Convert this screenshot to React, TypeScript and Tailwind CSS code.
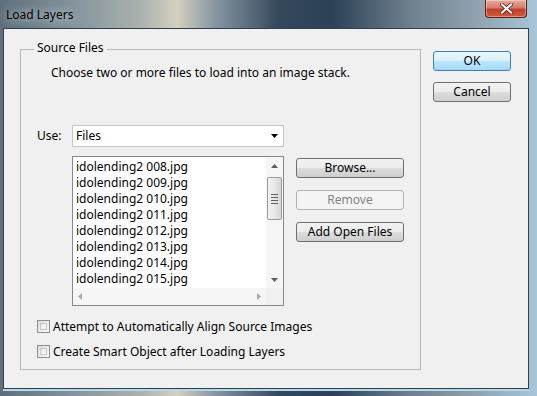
const files = [
  "idolending2 008.jpg",
  "idolending2 009.jpg",
  "idolending2 010.jpg",
  "idolending2 011.jpg",
  "idolending2 012.jpg",
  "idolending2 013.jpg",
  "idolending2 014.jpg",
  "idolending2 015.jpg",
];

function Arrow({ dir, color = "#4d4d4d" }: { dir: "up" | "down" | "left" | "right"; color?: string }) {
  const pts = {
    up: "0,4 3.5,0 7,4",
    down: "0,0 3.5,4 7,0",
    left: "4,0 0,3.5 4,7",
    right: "0,0 4,3.5 0,7",
  }[dir];
  const w = dir === "up" || dir === "down" ? 7 : 4;
  const h = dir === "up" || dir === "down" ? 4 : 7;
  return (
    <svg width={w} height={h} viewBox={`0 0 ${w} ${h}`}>
      <polygon points={pts} fill={color} />
    </svg>
  );
}

function VistaButton({ label, primary, disabled, className }: { label: string; primary?: boolean; disabled?: boolean; className?: string }) {
  const skin = disabled
    ? "border-[#adb2b5] bg-[#f4f4f4] text-[#838383]"
    : primary
      ? "border-[#3c7fb1] bg-[linear-gradient(#eaf6fd_0%,#d9f0fc_50%,#bee6fd_50%,#a7d9f5_100%)] text-black"
      : "border-[#707070] bg-[linear-gradient(#f2f2f2_0%,#ebebeb_50%,#dddddd_50%,#cfcfcf_100%)] text-black";
  return (
    <div className={`flex items-center justify-center rounded-[3px] border ${skin} ${className ?? ""}`}>
      <span className="text-[12px] leading-none">{label}</span>
    </div>
  );
}

function Checkbox({ label }: { label: string }) {
  return (
    <div className="flex items-center gap-[3px]">
      <div className="h-[13px] w-[13px] border border-[#8f8f8f] bg-[linear-gradient(135deg,#dcdcdc,#fbfbfb)] p-[2px]">
        <div className="h-full w-full border border-[#c8c8c8] bg-[linear-gradient(135deg,#e6e6e6,#fdfdfd)]" />
      </div>
      <span className="text-[12px] leading-none">{label}</span>
    </div>
  );
}

export default function App() {
  return (
    <div
      className="h-[396px] w-[537px] overflow-hidden bg-[linear-gradient(90deg,#5e6f7b_0%,#7f909b_12%,#a9b1ad_26%,#d3d0bf_33%,#8796a2_40%,#34475b_52%,#2d4157_62%,#6d7f8d_76%,#8fa0ab_88%,#a7c6da_100%)]"
      style={{ fontFamily: '"Noto Sans", "Open Sans", sans-serif' }}
    >
      {/* title bar */}
      <div className="flex h-[28px] items-start justify-between">
        <span className="ml-[6px] mt-[9px] text-[12px] leading-none text-black [text-shadow:0_0_8px_rgba(255,255,255,0.9)]">
          Load Layers
        </span>
        <div className="mr-[10px] flex h-[18px] w-[42px] items-center justify-center rounded-b-[4px] border border-t-0 border-[#5a2019] bg-[linear-gradient(#e9a99c_0%,#d47e6c_45%,#c0402a_55%,#d2593d_100%)] shadow-[inset_0_0_0_1px_rgba(255,255,255,0.35)]">
          <svg width="13" height="11" viewBox="0 0 13 11">
            <path d="M2 1.5 L11 9.5 M11 1.5 L2 9.5" stroke="#4b1a12" strokeWidth="3.6" strokeLinecap="square" />
            <path d="M2 1.5 L11 9.5 M11 1.5 L2 9.5" stroke="#ffffff" strokeWidth="2.2" strokeLinecap="square" />
          </svg>
        </div>
      </div>

      {/* client area */}
      <div className="ml-[3px] h-[361px] w-[526px] border border-[#2f3f4d] bg-[#f0f0f0] shadow-[0_2px_0_#b7d6ea]">
        <div className="flex gap-[12px] pl-[16px] pt-[20px]">
          {/* Source Files group */}
          <div className="relative h-[321px] w-[401px] border border-[#b8b8b8] pl-[16px]">
            <span className="absolute left-[13px] top-[-10px] bg-[#f0f0f0] px-[3px] text-[12px] leading-[16px]">
              Source Files
            </span>
            <div className="ml-[14px] mt-[16px] text-[12px] leading-[14px]">
              Choose two or more files to load into an image stack.
            </div>

            <div className="mt-[45px] flex items-center gap-[10px]">
              <span className="w-[25px] text-[12px] leading-none">Use:</span>
              <div className="flex h-[22px] w-[212px] items-center justify-between border border-[#c5c5c5] bg-white pl-[3px] pr-[5px]">
                <span className="text-[12px] leading-none">Files</span>
                <Arrow dir="down" color="#000" />
              </div>
            </div>

            <div className="mt-[9px] flex">
              {/* list box */}
              <div className="ml-[35px] flex h-[150px] w-[212px] flex-col border border-[#828790] bg-white">
                <div className="flex h-[131px]">
                  <div className="flex flex-1 flex-col pl-[3px] pt-[2px]">
                    {files.map((f) => (
                      <div key={f} className="h-[16px] text-[12px] leading-[16px]">
                        {f}
                      </div>
                    ))}
                  </div>
                  <div className="flex w-[17px] flex-col items-center bg-[#f5f5f5]">
                    <div className="flex h-[17px] items-center justify-center">
                      <Arrow dir="up" color="#5f5f5f" />
                    </div>
                    <div className="mt-[3px] flex h-[43px] w-[15px] flex-col items-center justify-center gap-[2px] rounded-[2px] border border-[#9b9b9b] bg-[linear-gradient(90deg,#f3f3f3,#e7e7e7_50%,#d6d6d6)]">
                      <div className="h-px w-[7px] bg-[#5f5f5f]" />
                      <div className="h-px w-[7px] bg-[#5f5f5f]" />
                      <div className="h-px w-[7px] bg-[#5f5f5f]" />
                      <div className="h-px w-[7px] bg-[#5f5f5f]" />
                    </div>
                    <div className="flex-1" />
                    <div className="flex h-[17px] items-center justify-center">
                      <Arrow dir="down" color="#5f5f5f" />
                    </div>
                  </div>
                </div>
                <div className="flex h-[17px] bg-[#f5f5f5]">
                  <div className="flex flex-1 items-center justify-between px-[5px]">
                    <Arrow dir="left" color="#a9a9a9" />
                    <Arrow dir="right" color="#a9a9a9" />
                  </div>
                  <div className="w-[17px] bg-[#f0f0f0]" />
                </div>
              </div>

              {/* side buttons */}
              <div className="ml-[12px] mt-[2px] flex flex-col gap-[12px]">
                <VistaButton label="Browse..." className="h-[20px] w-[108px]" />
                <VistaButton label="Remove" disabled className="h-[20px] w-[108px]" />
                <VistaButton label="Add Open Files" className="h-[20px] w-[108px]" />
              </div>
            </div>

            <div className="mt-[14px] flex flex-col gap-[12px]">
              <Checkbox label="Attempt to Automatically Align Source Images" />
              <Checkbox label="Create Smart Object after Loading Layers" />
            </div>
          </div>

          {/* OK / Cancel */}
          <div className="mt-[2px] flex flex-col gap-[11px]">
            <VistaButton label="OK" primary className="h-[20px] w-[78px]" />
            <VistaButton label="Cancel" className="h-[20px] w-[78px]" />
          </div>
        </div>
      </div>
    </div>
  );
}
